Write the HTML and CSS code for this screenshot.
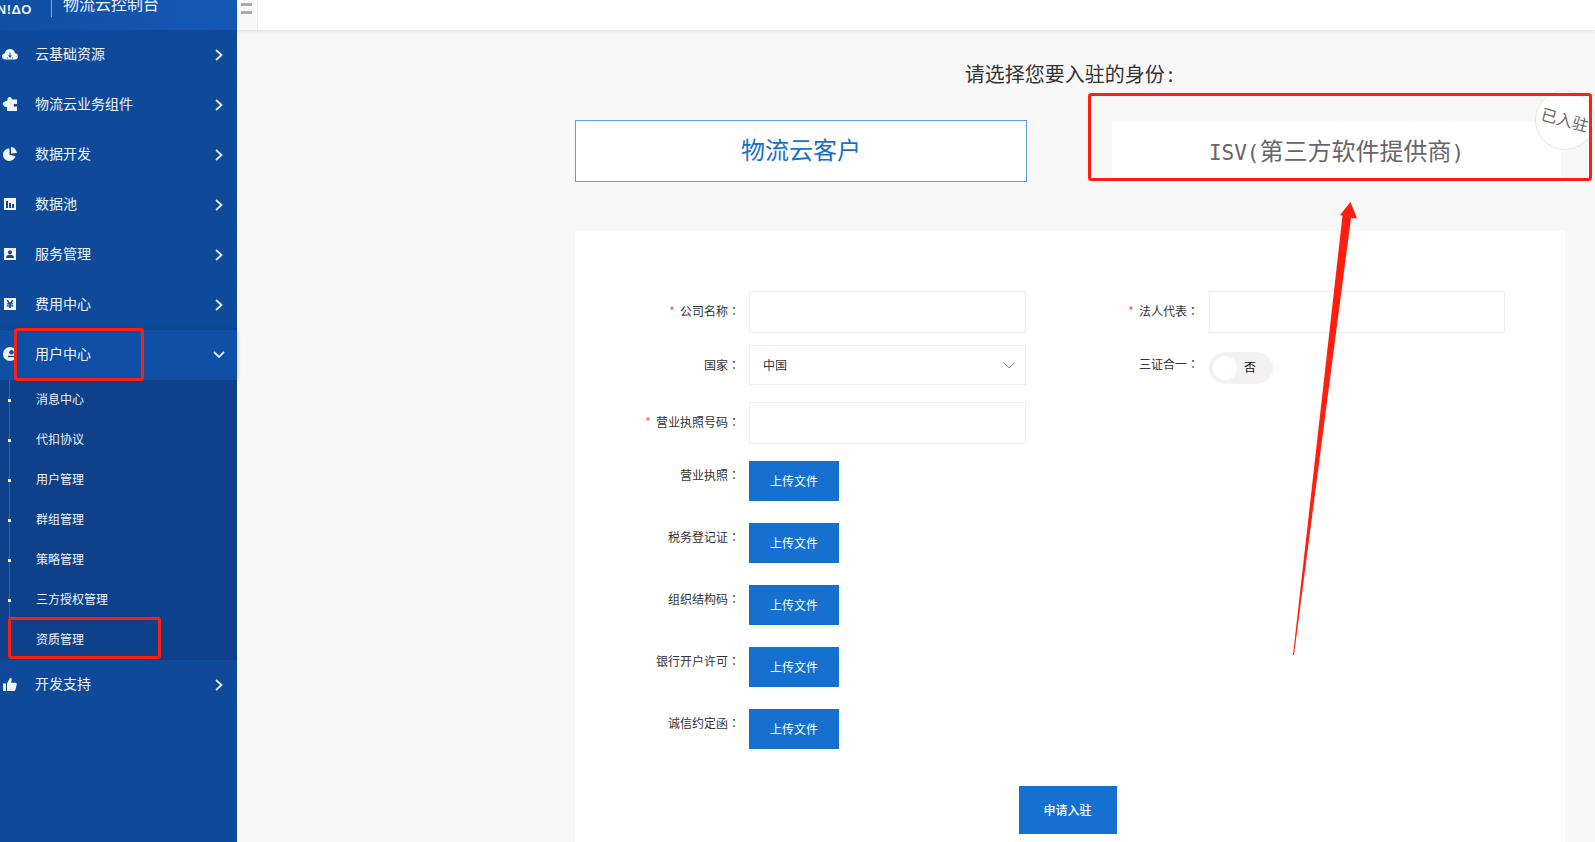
FILE: index.html
```html
<!DOCTYPE html>
<html lang="zh-CN">
<head>
<meta charset="utf-8">
<title>物流云控制台</title>
<link rel="stylesheet" href="styles.css">
</head>
<body>
<div class="app">
  <aside class="sidebar">
    <div class="brand">
      <span class="logo">N!ΔO</span>
      <span class="brand-line"></span>
      <span class="brand-name">物流云控制台</span>
    </div>
    <nav class="menu">
      <a class="item">
        <svg class="icon" viewBox="0 0 16 16"><path class="w" d="M3.400 13.500C1.500 13.500 0 12.200 0 10.400c0-1.600 1.100-2.800 2.600-3.100C3 5 5.200 3 8 3c2.600 0 4.700 1.800 5.200 4.200 1.600.2 2.800 1.500 2.800 3.200 0 1.800-1.400 3.100-3.300 3.100z"/><path class="b" d="M7.500 6.500h1v3h1.700L8 11.700 5.800 9.500h1.700zM5 11.500h1v1H5zM10 11.500h1v1h-1z"/></svg>
        <span class="label">云基础资源</span>
        <svg class="chev" viewBox="0 0 8 12"><path d="M1 1l5.500 5L1 11"/></svg>
      </a>
      <a class="item">
        <svg class="icon" viewBox="0 0 16 16"><path class="w" d="M5.500 3.500C5.500 1.800 6.500 1 7.700 1s2.300.9 2.300 2.500h5V8h-1.500c-1-.8-1.800.1-1.800 1.200s.8 2 1.800 1.300H15V15H5v-2.500c.6-1-.2-1.800-1.300-1.800S1.800 10 1.800 9.400C.6 9 .4 8.200 1 7.200 1.600 6 3 5 5 5z"/></svg>
        <span class="label">物流云业务组件</span>
        <svg class="chev" viewBox="0 0 8 12"><path d="M1 1l5.500 5L1 11"/></svg>
      </a>
      <a class="item">
        <svg class="icon" viewBox="0 0 16 16"><path class="w" d="M7.500 2.500v6.300l6 1.500C12.600 13 10.300 15 7.500 15 4 15 1 12.200 1 8.700s2.900-6.200 6.500-6.200z"/><path class="w" d="M9 1c3 .2 5.500 2.600 5.800 6L9 7.500z"/></svg>
        <span class="label">数据开发</span>
        <svg class="chev" viewBox="0 0 8 12"><path d="M1 1l5.500 5L1 11"/></svg>
      </a>
      <a class="item">
        <svg class="icon" viewBox="0 0 16 16"><path class="w" d="M2 2h12v12H2z"/><path class="b" d="M4 5h2v7H4zM7 7h2v5H7zM10 8h2v4h-2z"/></svg>
        <span class="label">数据池</span>
        <svg class="chev" viewBox="0 0 8 12"><path d="M1 1l5.500 5L1 11"/></svg>
      </a>
      <a class="item">
        <svg class="icon" viewBox="0 0 16 16"><path class="w" d="M2 2h12v12H2z"/><circle class="b" cx="8" cy="6.200" r="2"/><path class="b" d="M4 12c0-2.200 1.700-3.300 4-3.300s4 1.100 4 3.300z"/></svg>
        <span class="label">服务管理</span>
        <svg class="chev" viewBox="0 0 8 12"><path d="M1 1l5.500 5L1 11"/></svg>
      </a>
      <a class="item">
        <svg class="icon" viewBox="0 0 16 16"><path class="w" d="M2 2h12v12H2z"/><path class="b" d="M4.300 4h1.800L8 6.800 9.900 4h1.800L9.500 7.300h1.700v1.200H8.800v.8h2.400v1.200H8.800V12H7.200v-1.500H4.800V9.300h2.400v-.8H4.800V7.300h1.700z"/></svg>
        <span class="label">费用中心</span>
        <svg class="chev" viewBox="0 0 8 12"><path d="M1 1l5.500 5L1 11"/></svg>
      </a>
      <a class="item open">
        <svg class="icon" viewBox="0 0 16 16"><circle class="w" cx="8" cy="8" r="7"/><circle class="b" cx="9.500" cy="6.300" r="2.200"/><path class="b" d="M6 9.800h9v1.400H6z"/></svg>
        <span class="label">用户中心</span>
        <svg class="chev-down" viewBox="0 0 12 8"><path d="M1 1l5 5 5-5"/></svg>
      </a>
      <ul class="submenu">
        <li>消息中心</li>
        <li>代扣协议</li>
        <li>用户管理</li>
        <li>群组管理</li>
        <li>策略管理</li>
        <li>三方授权管理</li>
        <li>资质管理</li>
      </ul>
      <a class="item">
        <svg class="icon" viewBox="0 0 16 16"><path class="w" d="M1 7.500h3V15H1zM5 7.500L8 2c1.300-.3 2 .6 1.700 1.900L9 6.800h4.500c1 0 1.400.8 1.200 1.700l-1.300 5.500c-.2.700-.7 1-1.400 1H5z"/></svg>
        <span class="label">开发支持</span>
        <svg class="chev" viewBox="0 0 8 12"><path d="M1 1l5.500 5L1 11"/></svg>
      </a>
    </nav>
  </aside>

  <div class="main">
    <header class="topbar">
      <div class="toggle-nav"><span></span><span></span></div>
    </header>
    <section class="content">
      <h1 class="title">请选择您要入驻的身份<span class="title-colon">:</span></h1>
      <div class="roles">
        <div class="role active">物流云客户</div>
        <div class="role">
          <span class="mono">ISV(</span>第三方软件提供商<span class="mono">)</span>
          <div class="stamp"><span>已入驻</span></div>
        </div>
      </div>
      <div class="panel">
        <div class="columns">
          <div class="col-left">
            <div class="field">
              <label class="field-label"><i>*</i>公司名称<span class="colon" lang="zh-TW">：</span></label>
              <div class="input"></div>
            </div>
            <div class="field gap-s">
              <label class="field-label">国家<span class="colon" lang="zh-TW">：</span></label>
              <div class="input select">中国
                <svg class="select-arrow" viewBox="0 0 12 7"><path d="M.5.500L6 6l5.500-5.500"/></svg>
              </div>
            </div>
            <div class="field gap-m">
              <label class="field-label"><i>*</i>营业执照号码<span class="colon" lang="zh-TW">：</span></label>
              <div class="input"></div>
            </div>
            <div class="field upload gap-m">
              <label class="field-label">营业执照<span class="colon" lang="zh-TW">：</span></label>
              <button class="btn">上传文件</button>
            </div>
            <div class="field upload gap-l">
              <label class="field-label">税务登记证<span class="colon" lang="zh-TW">：</span></label>
              <button class="btn">上传文件</button>
            </div>
            <div class="field upload gap-l">
              <label class="field-label">组织结构码<span class="colon" lang="zh-TW">：</span></label>
              <button class="btn">上传文件</button>
            </div>
            <div class="field upload gap-l">
              <label class="field-label">银行开户许可<span class="colon" lang="zh-TW">：</span></label>
              <button class="btn">上传文件</button>
            </div>
            <div class="field upload gap-l">
              <label class="field-label">诚信约定函<span class="colon" lang="zh-TW">：</span></label>
              <button class="btn">上传文件</button>
            </div>
          </div>
          <div class="col-right">
            <div class="field">
              <label class="field-label"><i>*</i>法人代表<span class="colon" lang="zh-TW">：</span></label>
              <div class="input wide"></div>
            </div>
            <div class="field switch-row">
              <label class="field-label">三证合一<span class="colon" lang="zh-TW">：</span></label>
              <div class="switch"><span class="knob"></span><span class="switch-text">否</span></div>
            </div>
          </div>
        </div>
        <div class="actions"><button class="btn submit">申请入驻</button></div>
      </div>
    </section>
  </div>
</div>
<svg class="marks" viewBox="0 0 1595 842">
  <rect x="15.500" y="329.500" width="127" height="50" rx="2"/>
  <rect x="9.500" y="618.500" width="150" height="39" rx="2"/>
  <rect x="1089.500" y="94.500" width="501" height="85" rx="2"/>
  <polygon points="1293,655 1294,655 1351,218 1357,218.500 1350.500,202 1340,215 1342.500,215.500"/>
</svg>
</body>
</html>
```

FILE: styles.css
```css
* { box-sizing: border-box; margin: 0; padding: 0; }
html, body { height: 100%; overflow: hidden; }
body {
  position: relative;
  font-family: "Noto Sans CJK SC", "Noto Sans", sans-serif;
  font-size: 12px;
  color: #333;
  background: #f8f8f8;
}
.app { display: flex; height: 100vh; overflow: hidden; }

.sidebar { width: 237px; flex: none; background: #0e4a99; color: #eef3fa; }
.brand {
  height: 30px;
  display: flex;
  align-items: flex-start;
  overflow: hidden;
  background: linear-gradient(90deg, #0f4fa3, #1558b6);
}
.logo {
  width: 32px;
  flex: none;
  display: flex;
  justify-content: flex-end;
  overflow: hidden;
  white-space: nowrap;
  font: bold 13px/18px "Liberation Sans", sans-serif;
  letter-spacing: .5px;
  margin-top: 1px;
}
.brand-line { width: 1px; height: 17px; margin-left: 19px; background: #7fa3d6; flex: none; }
.brand-name { margin: -9px 0 0 11px; font-size: 16px; line-height: 24px; white-space: nowrap; }

.item { height: 50px; display: flex; align-items: center; font-size: 14px; }
.item.open { background: #0f4fa5; box-shadow: 0 0 4px rgba(0,0,0,.2); position: relative; }
.icon { width: 16px; height: 16px; margin: -2px 0 0 2px; flex: none; }
.icon .w { fill: #f4f6fb; }
.icon .b { fill: #0e4a99; }
.label { margin: -4px 0 0 17px; line-height: 20px; }
.chev { width: 8px; height: 12px; margin-left: auto; margin-right: 14px; fill: none; stroke: #e6edf7; stroke-width: 1.800; }
.chev-down { width: 12px; height: 8px; margin-left: auto; margin-right: 12px; fill: none; stroke: #e6edf7; stroke-width: 1.800; }

.submenu { list-style: none; background: #0f418a; position: relative; }
.submenu::before {
  content: "";
  position: absolute;
  left: 9px;
  top: 0;
  height: 240px;
  width: 1px;
  background: #3462a5;
}
.submenu li { height: 40px; line-height: 38px; padding-left: 36px; font-size: 12px; position: relative; }
.submenu li::before {
  content: "";
  position: absolute;
  left: 8px;
  top: 19px;
  width: 3px;
  height: 3px;
  background: #fff;
}

.main { flex: 1; min-width: 0; display: flex; flex-direction: column; }
.topbar { height: 30px; flex: none; background: #fff; box-shadow: 0 1px 3px rgba(0,0,0,.12); position: relative; }
.toggle-nav {
  width: 21px;
  height: 30px;
  background: #f8f8f8;
  border-right: 1px solid #eee;
  padding: 3px 0 0 4px;
  display: flex;
  flex-direction: column;
  gap: 5px;
}
.toggle-nav span { width: 11px; height: 3px; background: #aaa; }

.content { flex: 1; min-height: 0; padding: 30px 30px 0 338px; display: flex; flex-direction: column; }
.title { height: 30px; line-height: 28px; font-size: 20px; font-weight: 400; text-align: center; color: #333; margin-bottom: 30px; padding-right: 2px; }
.title-colon { margin-left: 3px; }
.roles { display: flex; gap: 84px; }
.role {
  position: relative;
  width: 451px;
  height: 62px;
  line-height: 58px;
  text-align: center;
  font-size: 24px;
  background: #fff;
  border: 1px solid #f8f8f8;
  color: #666;
  white-space: nowrap;
}
.role.active { width: 452px; line-height: 56px; color: #1670cc; border-color: #5a9cf0; }
.mono { font-family: "DejaVu Sans Mono", monospace; font-size: 21px; }
.stamp {
  position: absolute;
  right: -34px;
  top: -31px;
  width: 60px;
  height: 60px;
  border-radius: 50%;
  background: #fff;
  border: 1px solid #e6e6e6;
  display: flex;
  align-items: center;
  justify-content: center;
  font-size: 16px;
  line-height: 20px;
  color: #666;
}
.stamp span { transform: rotate(15deg); display: block; margin-top: -2px; }

.panel { flex: 1; margin-top: 49px; background: #fff; padding-top: 60px; }
.columns { display: flex; }
.col-left { width: 451px; flex: none; }
.col-right { margin-left: 33px; }

.field { display: flex; align-items: flex-start; }
.field-label {
  width: 165px;
  flex: none;
  height: 40px;
  line-height: 39px;
  text-align: right;
  margin-right: 9px;
  color: #333;
  white-space: nowrap;
}
.field-label i { font-style: normal; color: #f55; margin-right: 5px; }
.colon { font-family: "Noto Sans CJK TC", sans-serif; }
.col-right .field-label { width: 140px; margin-right: 10px; }
.upload .field-label { height: 30px; line-height: 28px; }

.input { width: 277px; height: 42px; border: 1px solid #eee; background: #fff; }
.input.wide { width: 296px; }
.input.select {
  height: 40px;
  line-height: 38px;
  padding-left: 13px;
  display: flex;
  justify-content: space-between;
  align-items: center;
  padding-right: 10px;
}
.select-arrow { width: 12px; height: 7px; fill: none; stroke: #888; stroke-width: 1; }
.gap-s { margin-top: 12px; }
.gap-m { margin-top: 17px; }
.gap-l { margin-top: 22px; }

.switch-row { margin-top: 19px; }
.switch-row .field-label { height: 24px; line-height: 24px; }
.switch {
  width: 64px;
  height: 32px;
  border-radius: 16px;
  background: #f2f2f2;
  padding: 4px;
  display: flex;
  align-items: center;
}
.knob { width: 24px; height: 24px; border-radius: 50%; background: #fff; flex: none; }
.switch-text { margin: -3px 0 0 7px; color: #111; }

.btn {
  width: 90px;
  height: 40px;
  border: 0;
  padding-bottom: 2px;
  background: #1570cf;
  color: #fff;
  font: 12px "Noto Sans CJK SC", sans-serif;
  display: block;
}
.actions { display: flex; justify-content: center; margin-top: 37px; padding-right: 5px; }
.btn.submit { width: 98px; height: 48px; font-weight: 500; }

.marks {
  position: absolute;
  left: 0;
  top: 0;
  width: 1595px;
  height: 842px;
  pointer-events: none;
}
.marks rect { fill: none; stroke: #ff1f10; stroke-width: 3; }
.marks polygon { fill: #ff1f10; }
```
